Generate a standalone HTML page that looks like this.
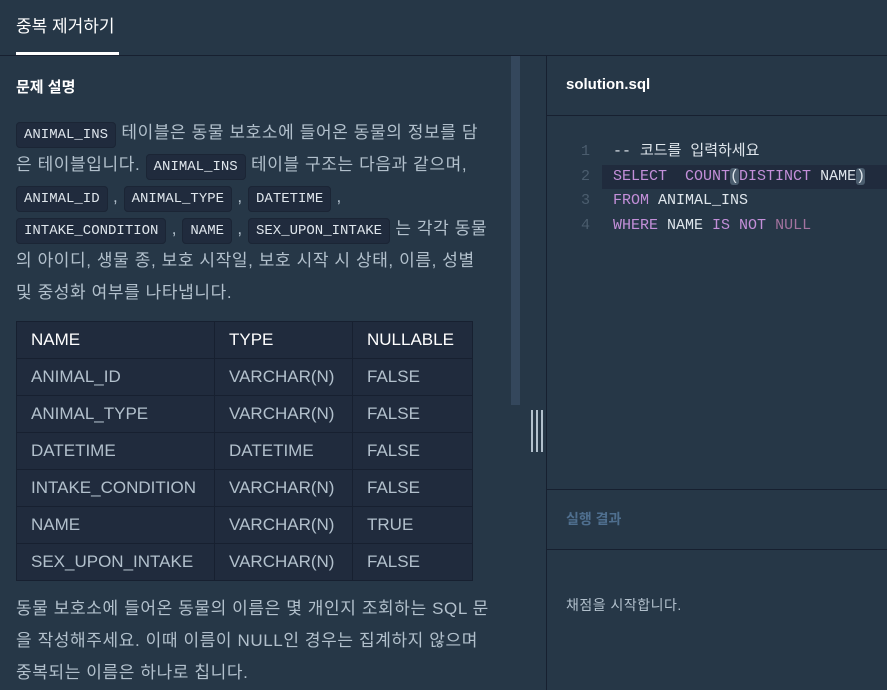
<!DOCTYPE html>
<html><head><meta charset="utf-8"><style>
*{margin:0;padding:0;box-sizing:border-box}
body{width:887px;height:690px;overflow:hidden;background:#263747;font-family:"Liberation Sans","Noto Sans CJK KR",sans-serif;color:#b2c0cc;position:relative}
.tabbar{position:absolute;left:0;top:0;width:887px;height:56px;border-bottom:1px solid #172030}
.tab{position:absolute;left:16px;top:12px;font-size:17px;color:#fff}
.tabline{position:absolute;left:16px;top:52px;width:103px;height:3px;background:#fff}
.left{position:absolute;left:0;top:56px;width:546px;height:634px;overflow:hidden}
h3{position:absolute;left:16px;top:20px;font-size:15px;color:#fff;font-weight:bold}
.l{position:absolute;left:16px;white-space:nowrap;font-size:17px;line-height:32px;color:#b2c0cc;letter-spacing:0.6px}
code{font-family:"Liberation Mono",monospace;font-size:14px;background:#202b3d;border:1px solid #1b2535;border-radius:4px;padding:4px 7px;color:#dfe6ec;letter-spacing:0}
table{position:absolute;left:16px;top:265px;border-collapse:collapse;background:#202b3d;font-size:17px}
td{border:1px solid #172030;height:37px;padding:0 14px;color:#b2c0cc}
tr:first-child td{color:#fff}
.sb{position:absolute;left:511px;top:0;width:9px;height:349px;background:#34475c}
.handle{position:absolute;left:531px;top:410px;width:12px;height:42px;border-left:2px solid #b2c0cc;border-right:2px solid #b2c0cc}
.handle:after{content:"";position:absolute;left:3px;top:0;width:2px;height:42px;background:#b2c0cc}
.right{position:absolute;left:546px;top:56px;width:341px;height:634px;border-left:1px solid #172030}
.fh{height:60px;border-bottom:1px solid #172030;padding:20px 0 0 19px;font-size:15px;font-weight:bold;color:#fff}
.code{position:absolute;left:0;top:84px;width:341px;font-family:"Liberation Mono","Noto Sans CJK KR",monospace;font-size:15px}
.ln{height:24.5px;line-height:24.5px;position:relative}
.ln .n{position:absolute;left:34px;color:#4b5d6e}
.ln .c{position:absolute;left:66px;white-space:pre;color:#dfe6ec}
.ln.act{background:#202b3d;margin-left:55px}
.ln.act .n{left:-21px}.ln.act .c{left:11px}
.k{color:#c38fd9}.cm{color:#e8774b}.nl{color:#a3739f}
.br{background:#4b5d6e;border-radius:3px}
.rh{position:absolute;top:433px;left:0;width:341px;height:61px;border-top:1px solid #172030;border-bottom:1px solid #172030;padding:19px 0 0 19px;font-size:14px;font-weight:bold;color:#4f6f8f}
.rt{position:absolute;top:539px;left:19px;font-size:14px;color:#b2c0cc;letter-spacing:0.5px}
</style></head><body>
<div class="tabbar"><div class="tab">중복 제거하기</div><div class="tabline"></div></div>
<div class="left">
<h3>문제 설명</h3>
<div class="l" style="top:61px"><code>ANIMAL_INS</code> 테이블은 동물 보호소에 들어온 동물의 정보를 담</div>
<div class="l" style="top:93px">은 테이블입니다. <code>ANIMAL_INS</code> 테이블 구조는 다음과 같으며,</div>
<div class="l" style="top:125px"><code>ANIMAL_ID</code> , <code>ANIMAL_TYPE</code> , <code>DATETIME</code> ,</div>
<div class="l" style="top:157px"><code>INTAKE_CONDITION</code> , <code>NAME</code> , <code>SEX_UPON_INTAKE</code> 는 각각 동물</div>
<div class="l" style="top:189px">의 아이디, 생물 종, 보호 시작일, 보호 시작 시 상태, 이름, 성별</div>
<div class="l" style="top:221px">및 중성화 여부를 나타냅니다.</div>
<table>
<tr><td style="width:198px">NAME</td><td style="width:138px">TYPE</td><td style="width:120px">NULLABLE</td></tr>
<tr><td>ANIMAL_ID</td><td>VARCHAR(N)</td><td>FALSE</td></tr>
<tr><td>ANIMAL_TYPE</td><td>VARCHAR(N)</td><td>FALSE</td></tr>
<tr><td>DATETIME</td><td>DATETIME</td><td>FALSE</td></tr>
<tr><td>INTAKE_CONDITION</td><td>VARCHAR(N)</td><td>FALSE</td></tr>
<tr><td>NAME</td><td>VARCHAR(N)</td><td>TRUE</td></tr>
<tr><td>SEX_UPON_INTAKE</td><td>VARCHAR(N)</td><td>FALSE</td></tr>
</table>
<div class="l" style="top:537px">동물 보호소에 들어온 동물의 이름은 몇 개인지 조회하는 SQL 문</div>
<div class="l" style="top:569px">을 작성해주세요. 이때 이름이 NULL인 경우는 집계하지 않으며</div>
<div class="l" style="top:601px">중복되는 이름은 하나로 칩니다.</div>
<div class="sb"></div>
</div>
<div class="handle"></div>
<div class="right">
<div class="fh">solution.sql</div>
<div class="code">
<div class="ln"><span class="n">1</span><span class="c cm">-- 코드를 입력하세요</span></div>
<div class="ln act"><span class="n">2</span><span class="c"><span class="k">SELECT  COUNT</span><span class="br">(</span><span class="k">DISTINCT</span> NAME<span class="br">)</span></span></div>
<div class="ln"><span class="n">3</span><span class="c"><span class="k">FROM</span> ANIMAL_INS</span></div>
<div class="ln"><span class="n">4</span><span class="c"><span class="k">WHERE</span> NAME <span class="k">IS NOT</span> <span class="nl">NULL</span></span></div>
</div>
<div class="rh">실행 결과</div>
<div class="rt">채점을 시작합니다.</div>
</div>
</body></html>
